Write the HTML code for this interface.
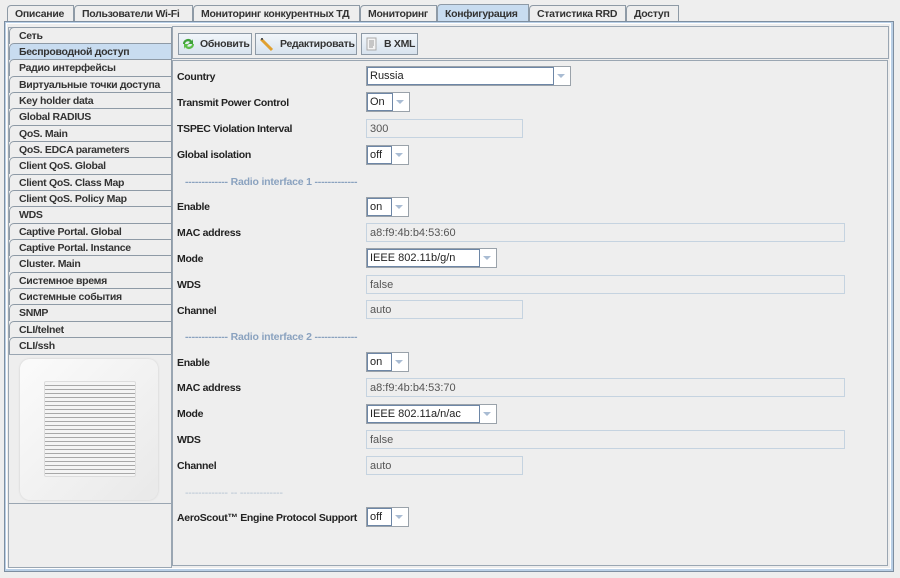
<!DOCTYPE html>
<html><head><meta charset="utf-8"><style>
*{box-sizing:border-box;margin:0;padding:0}
body{width:900px;height:578px;background:#eeeeee;font-family:"Liberation Sans",sans-serif;font-size:11px;color:#333;position:relative;overflow:hidden;white-space:nowrap}
.a{position:absolute}
.tab{position:absolute;top:5px;height:17px;border:1px solid #8e9aa6;border-bottom:none;background:#eeeeee;font-weight:bold;font-size:10.5px;letter-spacing:-0.3px;line-height:16px;padding-left:7px;color:#333;border-radius:4px 0 0 0;overflow:hidden}
.tab.sel{background:#c8dcf0;top:4px;height:18px;line-height:18px}
.li{position:absolute;left:9px;width:163px;height:17px;border:1px solid #8e9aa6;border-bottom:none;background:#eeeeee;font-weight:bold;font-size:10.5px;letter-spacing:-0.3px;line-height:16px;padding-left:9px;border-radius:5px 0 0 0;overflow:hidden}
.li.sel{background:#c8dcf0}
.lbl{position:absolute;left:177px;font-weight:bold;font-size:10.5px;letter-spacing:-0.3px;color:#222}
.cb{position:absolute;left:366px;height:20px;border:1px solid #9aa2aa;background:#fff}
.cb .t{position:absolute;left:0;top:0;bottom:0;border:1px solid #6d86a6;padding-left:2px;line-height:17px;font-size:11px;color:#222}
.cb .ar{position:absolute;right:0;top:0;width:18px;height:18px}
.cb .ar:after{content:"";position:absolute;left:5px;top:7px;border-left:4px solid transparent;border-right:4px solid transparent;border-top:4px solid #a9bcd3}
.tf{position:absolute;left:366px;height:19px;border:1px solid #c5d3e0;background:#eeeeee;padding-left:3px;line-height:18px;color:#555;font-size:11px}
.sep{position:absolute;left:185px;color:#8aa2bf;font-size:10.5px;letter-spacing:-0.2px;font-weight:bold}
.btn{position:absolute;top:33px;height:22px;border:1px solid #8e9aa6;background:linear-gradient(#f2f6fa,#d8e3ee);font-weight:bold;font-size:10.5px;letter-spacing:-0.3px;line-height:21px;padding-left:21px}
</style></head><body>
<div class="tab" style="left:7px;width:67px">Описание</div>
<div class="tab" style="left:74px;width:119px">Пользователи Wi-Fi</div>
<div class="tab" style="left:193px;width:167px">Мониторинг конкурентных ТД</div>
<div class="tab" style="left:360px;width:77px">Мониторинг</div>
<div class="tab sel" style="left:437px;width:92px">Конфигурация</div>
<div class="tab" style="left:529px;width:97px">Статистика RRD</div>
<div class="tab" style="left:626px;width:53px">Доступ</div>
<div class="a" style="left:4px;top:21px;width:890px;height:551px;border:1px solid #7d8ea0;background:#b9cfe6"></div>
<div class="a" style="left:6px;top:23px;width:885px;height:546px;border:1px solid #fff;background:#eeeeee"></div>
<div class="a" style="left:8px;top:27px;width:164px;height:541px;border:1px solid #9aa6b2;background:#eeeeee"></div>
<div class="li" style="top:27px">Сеть</div>
<div class="li sel" style="top:43px">Беспроводной доступ</div>
<div class="li" style="top:59px">Радио интерфейсы</div>
<div class="li" style="top:76px">Виртуальные точки доступа</div>
<div class="li" style="top:92px">Key holder data</div>
<div class="li" style="top:108px">Global RADIUS</div>
<div class="li" style="top:125px">QoS. Main</div>
<div class="li" style="top:141px">QoS. EDCA parameters</div>
<div class="li" style="top:157px">Client QoS. Global</div>
<div class="li" style="top:174px">Client QoS. Class Map</div>
<div class="li" style="top:190px">Client QoS. Policy Map</div>
<div class="li" style="top:206px">WDS</div>
<div class="li" style="top:223px">Captive Portal. Global</div>
<div class="li" style="top:239px">Captive Portal. Instance</div>
<div class="li" style="top:255px">Cluster. Main</div>
<div class="li" style="top:272px">Системное время</div>
<div class="li" style="top:288px">Системные события</div>
<div class="li" style="top:304px">SNMP</div>
<div class="li" style="top:321px">CLI/telnet</div>
<div class="li" style="top:337px">CLI/ssh</div>
<div class="a" style="left:8px;top:354px;width:164px;height:150px;border:1px solid #9aa6b2;background:#eeeeee"></div>
<div class="a" style="left:20px;top:359px;width:138px;height:141px;border-radius:10px;background:linear-gradient(135deg,#fbfbfb,#e9e9e9);box-shadow:0 0 2px #ccc"></div>
<div class="a" style="left:44px;top:381px;width:92px;height:96px;border:1px solid #ddd;background:repeating-linear-gradient(#f4f4f4 0 3px,#a8a8a8 3px 4px);border-radius:2px"></div>
<div class="a" style="left:172px;top:26px;width:717px;height:33px;border:1px solid #9aa6b2;background:#eeeeee"></div>
<div class="btn" style="left:178px;width:74px">Обновить</div>
<div class="btn" style="left:255px;width:102px;padding-left:24px">Редактировать</div>
<div class="btn" style="left:361px;width:57px;padding-left:22px">В XML</div>
<svg class="a" style="left:181px;top:37px" width="15" height="14" viewBox="0 0 15 14"><path d="M2 7a5 5 0 0 1 9-3l1-2v5H7l2-2A3 3 0 0 0 4 7z" fill="#3fa13a"/><path d="M13 7a5 5 0 0 1-9 3l-1 2V7h5l-2 2a3 3 0 0 0 5-2z" fill="#5cbf4a"/></svg>
<svg class="a" style="left:259px;top:36px" width="16" height="16"><path d="M2 3l11 11" stroke="#e0a030" stroke-width="3"/><path d="M2 3l2 0" stroke="#555" stroke-width="2"/></svg>
<svg class="a" style="left:366px;top:37px" width="12" height="14"><rect x="1" y="1" width="9" height="12" fill="#f4f4f4" stroke="#aaa"/><path d="M3 4h5M3 6h5M3 8h5M3 10h4" stroke="#999"/></svg>
<div class="a" style="left:172px;top:60px;width:716px;height:506px;border:1px solid #9aa6b2;background:#eeeeee"></div>
<div class="lbl" style="top:71px">Country</div>
<div class="cb" style="top:66px;width:205px"><div class="t" style="width:187px">Russia</div><div class="ar"></div></div>
<div class="lbl" style="top:97px">Transmit Power Control</div>
<div class="cb" style="top:92px;width:44px"><div class="t" style="width:26px">On</div><div class="ar"></div></div>
<div class="lbl" style="top:123px">TSPEC Violation Interval</div>
<div class="tf" style="top:119px;width:157px">300</div>
<div class="lbl" style="top:149px">Global isolation</div>
<div class="cb" style="top:145px;width:43px"><div class="t" style="width:25px">off</div><div class="ar"></div></div>
<div class="sep" style="top:176px">------------- Radio interface 1 -------------</div>
<div class="lbl" style="top:201px">Enable</div>
<div class="cb" style="top:197px;width:43px"><div class="t" style="width:25px">on</div><div class="ar"></div></div>
<div class="lbl" style="top:227px">MAC address</div>
<div class="tf" style="top:223px;width:479px">a8:f9:4b:b4:53:60</div>
<div class="lbl" style="top:253px">Mode</div>
<div class="cb" style="top:248px;width:131px"><div class="t" style="width:113px">IEEE 802.11b/g/n</div><div class="ar"></div></div>
<div class="lbl" style="top:279px">WDS</div>
<div class="tf" style="top:275px;width:479px">false</div>
<div class="lbl" style="top:305px">Channel</div>
<div class="tf" style="top:300px;width:157px">auto</div>
<div class="sep" style="top:331px">------------- Radio interface 2 -------------</div>
<div class="lbl" style="top:357px">Enable</div>
<div class="cb" style="top:352px;width:43px"><div class="t" style="width:25px">on</div><div class="ar"></div></div>
<div class="lbl" style="top:382px">MAC address</div>
<div class="tf" style="top:378px;width:479px">a8:f9:4b:b4:53:70</div>
<div class="lbl" style="top:408px">Mode</div>
<div class="cb" style="top:404px;width:131px"><div class="t" style="width:113px">IEEE 802.11a/n/ac</div><div class="ar"></div></div>
<div class="lbl" style="top:434px">WDS</div>
<div class="tf" style="top:430px;width:479px">false</div>
<div class="lbl" style="top:460px">Channel</div>
<div class="tf" style="top:456px;width:157px">auto</div>
<div class="sep" style="top:487px;color:#b0c0d0;font-weight:normal">------------- -- -------------</div>
<div class="lbl" style="top:512px">AeroScout™ Engine Protocol Support</div>
<div class="cb" style="top:507px;width:43px"><div class="t" style="width:25px">off</div><div class="ar"></div></div>
</body></html>
